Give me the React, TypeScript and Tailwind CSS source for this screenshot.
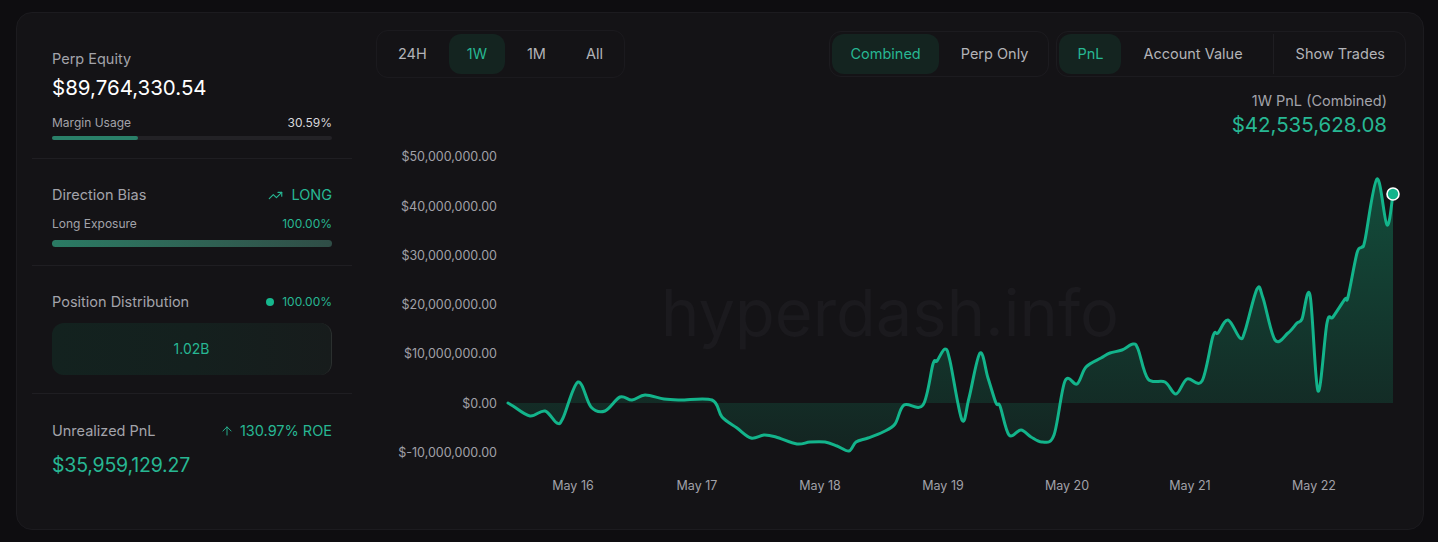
import { TrendingUp, ArrowUp } from "lucide-react";

type Pt = [number, number];

// traced from the reference, page coordinates
const points: Pt[] = [
  [508, 402], [513, 405], [530, 415], [545, 410], [557, 422], [563, 417], [578, 381], [591, 406],
  [605, 410], [620, 396], [632, 399], [645, 394], [664, 398], [680, 399], [712, 399], [722, 416],
  [737, 427], [751, 437], [764, 434], [776, 436], [797, 443], [810, 441], [825, 441], [837, 445],
  [849, 450], [856, 441], [868, 437], [883, 431], [895, 423], [904, 404], [923, 404], [933, 363],
  [937, 360], [945, 348], [950, 360], [962, 419], [969, 397], [980, 352], [988, 377], [996, 402],
  [1000, 405], [1009, 434], [1021, 429], [1031, 436], [1042, 441], [1054, 434], [1065, 380],
  [1077, 383], [1086, 366], [1101, 357], [1110, 352], [1122, 349], [1133, 343], [1138, 348],
  [1148, 378], [1165, 381], [1176, 393], [1187, 378], [1202, 380], [1213, 335], [1218, 332],
  [1228, 319], [1240, 337], [1245, 330], [1257, 288], [1263, 297], [1275, 339], [1288, 332],
  [1297, 322], [1302, 318], [1310, 294], [1318, 390], [1327, 322], [1333, 316], [1345, 298],
  [1348, 296], [1357, 252], [1362, 246], [1365, 239], [1377, 178], [1387, 224], [1393, 193],
];

function smoothPath(pts: Pt[]) {
  let d = `M${pts[0][0]},${pts[0][1]}`;
  for (let i = 0; i < pts.length - 1; i++) {
    const p0 = pts[i - 1] || pts[i];
    const p1 = pts[i];
    const p2 = pts[i + 1];
    const p3 = pts[i + 2] || p2;
    const c1x = p1[0] + (p2[0] - p0[0]) / 6;
    const c1y = p1[1] + (p2[1] - p0[1]) / 6;
    const c2x = p2[0] - (p3[0] - p1[0]) / 6;
    const c2y = p2[1] - (p3[1] - p1[1]) / 6;
    d += ` C${c1x.toFixed(1)},${c1y.toFixed(1)} ${c2x.toFixed(1)},${c2y.toFixed(1)} ${p2[0]},${p2[1]}`;
  }
  return d;
}

const yTicks = [
  { label: "$50,000,000.00", y: 155 },
  { label: "$40,000,000.00", y: 205 },
  { label: "$30,000,000.00", y: 254 },
  { label: "$20,000,000.00", y: 303 },
  { label: "$10,000,000.00", y: 352 },
  { label: "$0.00", y: 402 },
  { label: "$-10,000,000.00", y: 451 },
];

const xTicks = [
  { label: "May 16", x: 573 },
  { label: "May 17", x: 697 },
  { label: "May 18", x: 820 },
  { label: "May 19", x: 943 },
  { label: "May 20", x: 1067 },
  { label: "May 21", x: 1190 },
  { label: "May 22", x: 1314 },
];

function PnlChart() {
  const line = smoothPath(points);
  const last = points[points.length - 1];
  const area = `${line} L${last[0]},402 L${points[0][0]},402 Z`;

  return (
    <svg width={1026} height={362} viewBox="380 138 1026 362" className="block">
      <defs>
        <linearGradient id="pnlFill" gradientUnits="userSpaceOnUse" x1="0" y1="160" x2="0" y2="452">
          <stop offset="0" stopColor="#10b981" stopOpacity="0.36" />
          <stop offset="0.83" stopColor="#10b981" stopOpacity="0.15" />
          <stop offset="1" stopColor="#10b981" stopOpacity="0.1" />
        </linearGradient>
      </defs>

      <text
        x={890}
        y={335}
        textAnchor="middle"
        fontFamily="Inter, sans-serif"
        fontSize={65}
        fill="#1b1a1e"
      >
        hyperdash.info
      </text>

      {yTicks.map((t) => (
        <text
          key={t.label}
          x={497}
          y={t.y + 4.5}
          textAnchor="end"
          fontFamily="Inter, sans-serif"
          fontSize={12.5}
          fill="#a1a1a8"
        >
          {t.label}
        </text>
      ))}

      {xTicks.map((t) => (
        <text
          key={t.label}
          x={t.x}
          y={489}
          textAnchor="middle"
          fontFamily="Inter, sans-serif"
          fontSize={12.5}
          fill="#a1a1a8"
        >
          {t.label}
        </text>
      ))}

      <path d={area} fill="url(#pnlFill)" />
      <path d={line} fill="none" stroke="#13b48b" strokeWidth={3} strokeLinejoin="round" strokeLinecap="round" />
      <circle cx={last[0]} cy={last[1]} r={6} fill="#13b48b" stroke="#ffffff" strokeWidth={1.6} />
    </svg>
  );
}

type TabProps = { label: string; active?: boolean };

function Tab({ label, active }: TabProps) {
  return (
    <button
      className={
        active
          ? "h-10 rounded-xl bg-[#142420] px-[18px] text-[14.5px] text-[#27b793]"
          : "h-10 rounded-xl px-[18px] text-[14.5px] text-[#b3b3b8]"
      }
    >
      {label}
    </button>
  );
}

export default function App() {
  return (
    <div className="min-h-screen bg-[#0e0d10] pl-4 pr-[14px] pt-3 font-['Inter',sans-serif]">
      <div className="flex h-[518px] rounded-2xl border border-[#1c1b1f] bg-[#141316]">
        {/* left stats column */}
        <div className="ml-[15px] w-[320px] shrink-0">
          <section className="border-b border-[#1f1e22] px-5 pt-[36px] pb-[18px]">
            <p className="text-[14.5px] leading-5 text-[#a3a3aa]">Perp Equity</p>
            <p className="mt-[5px] text-[20.5px] leading-7 text-white">$89,764,330.54</p>
            <div className="mt-[13px] flex justify-between text-xs leading-4">
              <span className="text-[#a3a3aa]">Margin Usage</span>
              <span className="text-[#d8d8dc]">30.59%</span>
            </div>
            <div className="mt-[5px] h-1 rounded-full bg-[#232226]">
              <div className="h-1 w-[30.59%] rounded-full bg-[#2a8069]" />
            </div>
          </section>

          <section className="border-b border-[#1f1e22] px-5 pt-[26px] pb-[18px]">
            <div className="flex items-center justify-between text-[14.5px] leading-5">
              <span className="text-[#a3a3aa]">Direction Bias</span>
              <span className="flex items-center gap-2 text-[#27b793]">
                <TrendingUp size={15} strokeWidth={1.8} />
                LONG
              </span>
            </div>
            <div className="mt-[11px] flex justify-between text-xs leading-4">
              <span className="text-[#a3a3aa]">Long Exposure</span>
              <span className="text-[#27b793]">100.00%</span>
            </div>
            <div className="mt-2 h-[7px] rounded-full bg-gradient-to-r from-[#2a7b64] to-[#2f4d46]" />
          </section>

          <section className="border-b border-[#1f1e22] px-5 pt-[26px] pb-[18px]">
            <div className="flex items-center justify-between text-[14.5px] leading-5">
              <span className="text-[#a3a3aa]">Position Distribution</span>
              <span className="flex items-center gap-2 text-xs text-[#27b793]">
                <span className="h-2 w-2 rounded-full bg-[#16b78d]" />
                100.00%
              </span>
            </div>
            <div className="mt-[11px] flex h-[52px] items-center justify-center rounded-xl border-r border-[#2b302f] bg-gradient-to-r from-[#13221f] via-[#14201e] to-[#171c1c] text-sm text-[#27b793]">
              1.02B
            </div>
          </section>

          <section className="px-5 pt-[27px]">
            <div className="flex items-center justify-between text-[14.5px] leading-5">
              <span className="text-[#a3a3aa]">Unrealized PnL</span>
              <span className="flex items-center gap-1.5 text-[#27b793]">
                <ArrowUp size={14} strokeWidth={1.6} />
                130.97% ROE
              </span>
            </div>
            <p className="mt-[10px] text-[19.5px] leading-7 tracking-[-0.2px] text-[#27b793]">$35,959,129.27</p>
          </section>
        </div>

        {/* chart column */}
        <div className="ml-7 mr-[17px] min-w-0 flex-1 pt-[17px]">
          <div className="flex items-center justify-between">
            <div className="-ml-1 flex gap-1 rounded-xl border border-[#1b1a1e] p-[3px]">
              <Tab label="24H" />
              <Tab label="1W" active />
              <Tab label="1M" />
              <Tab label="All" />
            </div>
            <div className="flex gap-[7px]">
              <div className="flex gap-1 rounded-xl border border-[#1c1b1f] p-[2px]">
                <Tab label="Combined" active />
                <Tab label="Perp Only" />
              </div>
              <div className="flex items-center gap-1 rounded-xl border border-[#1c1b1f] p-[2px]">
                <Tab label="PnL" active />
                <Tab label="Account Value" />
                <div className="ml-2 h-10 w-px bg-[#1f1e22]" />
                <Tab label="Show Trades" />
              </div>
            </div>
          </div>

          <div className="mt-[13px] pr-[19px] text-right">
            <p className="text-[14.5px] leading-5 text-[#a3a3aa]">1W PnL (Combined)</p>
            <p className="text-[20.5px] leading-7 text-[#27b793]">$42,535,628.08</p>
          </div>

          <PnlChart />
        </div>
      </div>
    </div>
  );
}
